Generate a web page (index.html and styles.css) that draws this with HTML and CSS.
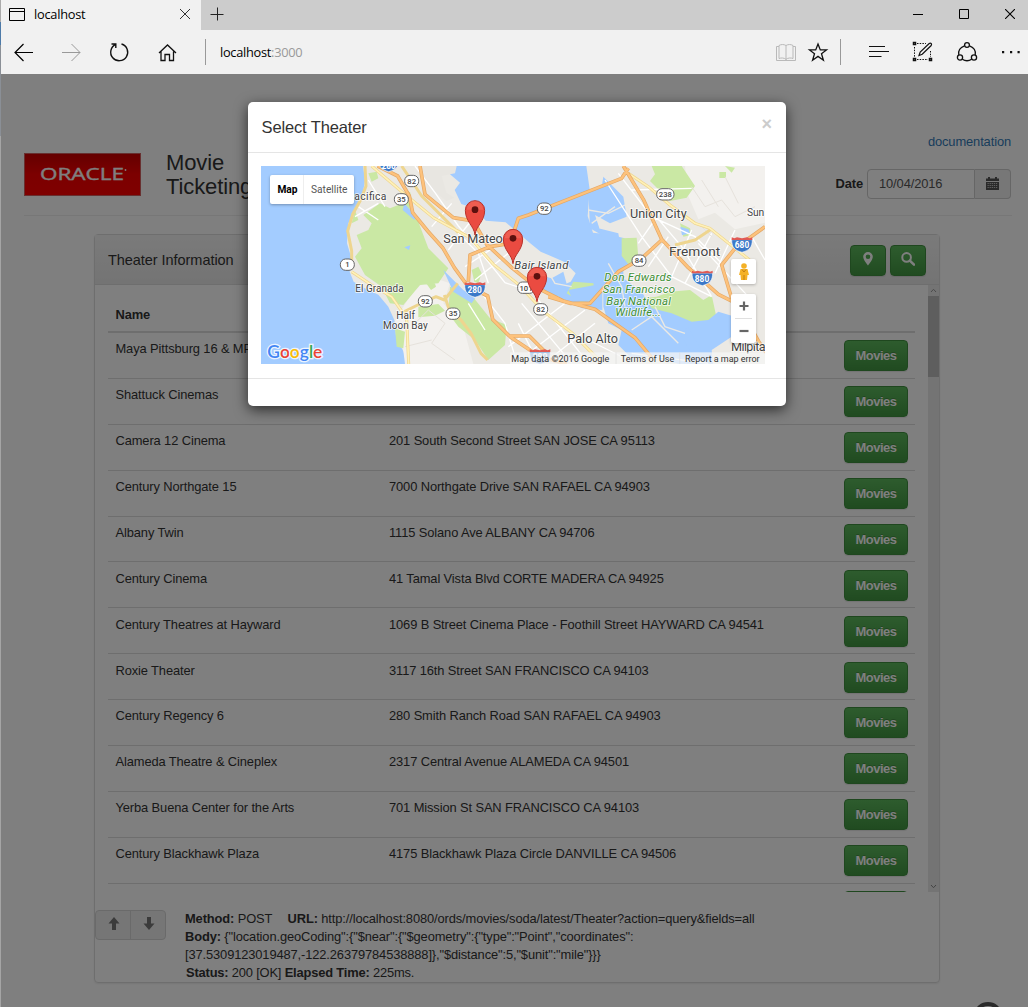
FILE: index.html
```html
<!DOCTYPE html>
<html lang="en">
<head>
<meta charset="utf-8">
<title>localhost</title>
<link rel="stylesheet" href="styles.css">
</head>
<body>
<div class="window">
  <header class="tabbar">
    <div class="tab">
      <svg class="tab-icon" viewBox="0 0 16 13"><path d="M.5.5h15v12H.5zM.5 3.5h15" fill="none" stroke="#000"/></svg>
      <span class="tab-title">localhost</span>
      <svg class="tab-close" viewBox="0 0 10 10"><path d="M0 0l10 10M10 0L0 10" stroke="#333"/></svg>
    </div>
    <svg class="tab-new" viewBox="0 0 14 14"><path d="M7.500 .5v13M.5 7.500h13" stroke="#222"/></svg>
    <div class="win-controls">
      <svg viewBox="0 0 10 10"><path d="M0 5.5h10" stroke="#000"/></svg>
      <svg viewBox="0 0 10 10"><path d="M.5.5h9v9h-9z" fill="none" stroke="#000"/></svg>
      <svg viewBox="0 0 10 10"><path d="M0 0l10 10M10 0L0 10" stroke="#000" stroke-width="1.1"/></svg>
    </div>
  </header>
  <nav class="toolbar">
    <div class="nav-icons">
      <svg viewBox="0 0 24 24"><path d="M21 12.5H3M11.5 4L3 12.5l8.500 8.500" stroke="#000" stroke-width="1.200"/></svg>
      <svg viewBox="0 0 24 24"><path d="M2 12.500h18M11.500 4l8.500 8.500-8.500 8.500" stroke="#999"/></svg>
      <svg viewBox="0 0 24 24"><path d="M13.500 4a8.500 8.500 0 1 1-5.700.4M3.500 4H7.800V8" stroke="#111" stroke-width="1.4"/></svg>
      <svg viewBox="0 0 24 24"><path d="M3 13L11.500 5l8.500 8M5 11.500V20.500h4v-6h4.500v6h4V11.500" stroke="#111" stroke-width="1.3"/></svg>
    </div>
    <div class="address"><span>localhost</span>:3000</div>
    <div class="tools">
      <svg viewBox="0 0 24 24"><path d="M12 5.500v14.500M12 5.500c-2-1.300-5-1.300-7 0v13c2-.8 5-.8 7 .8 2-1.600 5-1.600 7-.8v-13c-2-1.300-5-1.300-7 0M5 6.500H2.500v14h19v-14H19" stroke="#b9b9b9"/></svg>
      <svg viewBox="0 0 24 24"><path d="M12 4l2.300 5.900h6.200l-5 3.900 1.900 6.400-5.400-3.800-5.400 3.800 1.900-6.400-5-3.900h6.200z" stroke="#111" stroke-width="1.300"/></svg>
      <i class="sep"></i>
      <svg viewBox="0 0 24 24"><path d="M2 6.500h16M2 11.500h20M2 16.500h12.500" stroke="#111" stroke-width="1.200"/></svg>
      <svg viewBox="0 0 24 24"><path d="M6 3.500h9M3.500 7v10M6 19.500h11M19.500 11v6" stroke="#111" stroke-dasharray="1.500 1.200"/><path d="M2.500 2.500h2v2h-2zM2.500 18.500h2v2h-2zM18.500 18.500h2v2h-2z" stroke="#111" stroke-width="1.500"/><path d="M8 15.500l1.200-3.500 9-8.500c1.600-1 3 .4 2 2l-9 8.700z" stroke="#111" stroke-width="1.200"/></svg>
      <svg viewBox="0 0 24 24"><g stroke="#111" stroke-width="1.300"><circle cx="12" cy="5" r="2.400"/><circle cx="5" cy="17.500" r="2.600"/><circle cx="19" cy="17.500" r="2.600"/><path d="M9.500 5.800C5 7.500 3 11 3.800 15M14.500 5.800c4.500 1.700 6.500 5.200 5.700 9.200M7.300 19.200c3 2 6.400 2 9.400 0"/></g></svg>
      <svg viewBox="0 0 24 24"><path d="M3 11h2.200v2.200H3zM11 11h2.200v2.200H11zM18.500 11h2.200v2.200h-2.200z" fill="#111" stroke="none"/></svg>
    </div>
  </nav>

  <main class="page">
    <div class="page-head">
      <svg class="logo" viewBox="0 0 117 43">
        <defs><linearGradient id="red" x2="0" y2="1"><stop stop-color="#c80000"/><stop offset=".5" stop-color="#f80000"/><stop offset="1" stop-color="#ff0000"/></linearGradient></defs>
        <rect width="117" height="43" fill="url(#red)"/><rect x=".5" y=".5" width="116" height="42" fill="none" stroke="#d06060"/>
        <text x="16" y="27" textLength="84" lengthAdjust="spacingAndGlyphs" class="logo-text">ORACLE</text><circle cx="101.500" cy="17" r=".9" fill="#fff"/>
      </svg>
      <h1>Movie<br>Ticketing</h1>
      <div class="head-right">
        <a class="doc-link">documentation</a>
        <div class="date-row">
          <label>Date</label>
          <div class="date-input">10/04/2016</div>
          <div class="date-addon"><svg viewBox="0 0 13 13"><path d="M0 1.500h2V0h2v1.500h5V0h2v1.500h2V4H0zM0 5h13v8H0z" fill="#555"/><path d="M1.500 6.500h10M1.500 8.500h10M1.500 10.500h10" stroke="#ddd" stroke-width=".8" stroke-dasharray="1.300 .8"/></svg></div>
        </div>
      </div>
    </div>

    <section class="panel">
      <div class="panel-heading">
        <h2>Theater Information</h2>
        <button class="btn icon-btn"><svg viewBox="0 0 14 14"><path d="M7 0a4.800 4.800 0 0 0-4.800 4.800C2.200 8 7 13.500 7 13.500S11.800 8 11.800 4.800A4.800 4.800 0 0 0 7 0zm0 2.500a2.300 2.300 0 1 1 0 4.600 2.300 2.300 0 0 1 0-4.600z" fill="#fff" fill-rule="evenodd"/></svg></button>
        <button class="btn icon-btn"><svg viewBox="0 0 14 14"><circle cx="5.600" cy="5.400" r="4.300" fill="none" stroke="#fff" stroke-width="2"/><path d="M8.800 8.600l4.200 4" stroke="#fff" stroke-width="2.600" stroke-linecap="round"/></svg></button>
      </div>
      <div class="scroller">
        <div class="table">
          <div class="row row-head"><span>Name</span></div>
          <div class="row"><span>Maya Pittsburg 16 &amp; MPX</span><span></span><button class="btn">Movies</button></div>
          <div class="row"><span>Shattuck Cinemas</span><span></span><button class="btn">Movies</button></div>
          <div class="row"><span>Camera 12 Cinema</span><span>201 South Second Street SAN JOSE CA 95113</span><button class="btn">Movies</button></div>
          <div class="row"><span>Century Northgate 15</span><span>7000 Northgate Drive SAN RAFAEL CA 94903</span><button class="btn">Movies</button></div>
          <div class="row"><span>Albany Twin</span><span>1115 Solano Ave ALBANY CA 94706</span><button class="btn">Movies</button></div>
          <div class="row"><span>Century Cinema</span><span>41 Tamal Vista Blvd CORTE MADERA CA 94925</span><button class="btn">Movies</button></div>
          <div class="row"><span>Century Theatres at Hayward</span><span>1069 B Street Cinema Place - Foothill Street HAYWARD CA 94541</span><button class="btn">Movies</button></div>
          <div class="row"><span>Roxie Theater</span><span>3117 16th Street SAN FRANCISCO CA 94103</span><button class="btn">Movies</button></div>
          <div class="row"><span>Century Regency 6</span><span>280 Smith Ranch Road SAN RAFAEL CA 94903</span><button class="btn">Movies</button></div>
          <div class="row"><span>Alameda Theatre &amp; Cineplex</span><span>2317 Central Avenue ALAMEDA CA 94501</span><button class="btn">Movies</button></div>
          <div class="row"><span>Yerba Buena Center for the Arts</span><span>701 Mission St SAN FRANCISCO CA 94103</span><button class="btn">Movies</button></div>
          <div class="row"><span>Century Blackhawk Plaza</span><span>4175 Blackhawk Plaza Circle DANVILLE CA 94506</span><button class="btn">Movies</button></div>
          <div class="row"><span></span><span></span><button class="btn"></button></div>
        </div>
        <div class="scrollbar">
          <svg viewBox="0 0 11 11"><path d="M3 7l2.500-2.700L8 7" fill="none" stroke="#999"/></svg>
          <div class="thumb"></div>
          <svg viewBox="0 0 11 11"><path d="M3 4l2.500 2.700L8 4" fill="none" stroke="#888"/></svg>
        </div>
      </div>
      <div class="panel-footer">
        <div class="pager">
          <span><svg viewBox="0 0 12 13"><path d="M6 0l5.500 6.500H8V13H4V6.500H.5z" fill="#777"/></svg></span>
          <span><svg viewBox="0 0 12 13"><path d="M6 13L.5 6.500H4V0h4v6.500h3.500z" fill="#777"/></svg></span>
        </div>
        <div class="request">
          <div><b>Method:</b> POST <b class="url">URL:</b> http://localhost:8080/ords/movies/soda/latest/Theater?action=query&amp;fields=all</div>
          <div><b>Body:</b> {"location.geoCoding":{"$near":{"$geometry":{"type":"Point","coordinates":</div>
          <div>[37.5309123019487,-122.26379784538888]},"$distance":5,"$unit":"mile"}}}</div>
          <div class="status"><b>Status:</b> 200 [OK] <b>Elapsed Time:</b> 225ms.</div>
        </div>
      </div>
    </section>
    <div class="corner-badge"></div>

    <div class="backdrop"></div>
    <div class="modal">
      <div class="modal-header"><h3>Select Theater</h3><span class="close">×</span></div>
      <div class="modal-body">
        <div class="map">
          <svg class="map-art" viewBox="18 18 1512 594">
            <defs>
              <g id="interstate"><path d="M-31-17h62c0 22-8 32-31 38-23-6-31-16-31-38z" fill="#3b78c8" stroke="#fff" stroke-width="2"/><path d="M-31-24l8 3 8-3 15 3 15-3 8 3 8-3v8h-62z" fill="#e05a55"/></g>
              <g id="shield"><rect x="-21" y="-17" width="42" height="34" rx="16" fill="#fff" stroke="#666" stroke-width="3"/></g>
              <g id="pin"><path d="M0 76C-3 48-29 36-29 2a29 29 0 0 1 58 0C29 36 3 48 0 76z" fill="#ea4b41" stroke="#b8332c" stroke-width="3"/><path d="M-25 0a25 25 0 0 1 50 0" fill="#f36f62" opacity=".5"/><circle r="10" fill="#5c100e"/></g>
            </defs>
            <rect x="18" y="18" width="1512" height="594" fill="#a3ccff"/>
            <!-- land masses -->
            <path d="M324 18l6 42-8 50-22 45-20 35-4 60 12 40-4 45 12 30 24 15 50 24 30 36 18 40 6 55 22 40 8 37h1080V18H994l10 70-6 80 16 50 45 5 50 12-5 35 38 20-55 60-45 50 0 50-60-5-70-30-10-30 45-20 15-25-35-35-70-30-35-28-70-60-60-5-28-35-45-15-20-42 16-22-30-25-10-35z" fill="#ebe9e4"/>
            <path d="M500 18h105l-5 22-40 8 14 50 24 15-24 10-60-50z" fill="#e8e6e1"/>
            <!-- hills -->
            <path d="M470 400l55-50 60 20-20 60 60 70 30 112H450l-10-80-20-50zM1290 18h240v170l-90 20-60-50-50 20-30-70z" fill="#f3f1ee"/>
            <!-- parks -->
            <g fill="#cae8a4">
              <path d="M325 165l50-35 30 15 50-20 35 60 30 80 60 60-30 45-55 5-50 60-40-5-25-50-50-35-30-55 20-25-15-40 35-15 10-20zM585 380l60 20 60 75 50 20-5 60-50 45-40-60-50-40-30-40zM340 40l25-5 5 20-20 10zM440 105l25-10 10 45-20 10zM420 505l30 10-5 50-20-5zM490 440l60-8 20 20-30 15-50 5zM510 365l25-10 8 25-15 10zM650 330l20-10 10 20-10 30-12-5zM300 150l10 30-20 10z"/>
              <path d="M1190 18h90l40 60-25 35-50 10-60-60 15-20zM1100 235l45-2 5 60-30 20-20-25zM955 365l60 5 10 50-50 5-40-25zM1155 415l50-5 40-15 60-5 40 30 25-15 15 70-30 45-80-20-50-30-50-10zM1275 190l30 15 5 20-25 5zM1410 18l30 5-10 15zM1393 36h20v18h-20z"/>
            </g>
            <!-- bay and salt ponds -->
            <path d="M1045 440l0-75 25-60 35 10 0 40 55 40 30 50 60 15 60 25 50-5 30-25 50 15-10 60-60 40 5 50-40 20-70-30-70-20-70 0-35-35 10-45-40-20z" fill="#a3ccff"/>
            <g fill="#a3ccff"><path d="M1000 90l40-10 5-30 60 60 10 60-50 20-45-25 20 60-35-20zM1030 205l60 15 10 60-40-10zM850 345l40 10 35-20 15 55-35 20-60-20zM940 390l80-15 15 45-80 5zM565 330l60 60 35 25-10 15-55-35zM448 130l35 40-5 10-35-30zM1276 200l25 8 4 12-24 6zM1270 515l30-12 35 60-30 8zM448 262l18-6-4 14z"/></g>
            <g fill="none" stroke="#ebe9e4" stroke-width="4"><path d="M1000 150l60 10 60-30M1010 190l70-50M1060 310l40 70 10 60M1200 440l30 60 60 20M1130 510l60-40 80 80M870 320l30 50 50 10"/></g>
            <!-- local streets -->
            <g fill="none" stroke="#fff" stroke-width="4">
              <path d="M480 18l60 80 70 100 60 70 80 100 60 20M590 130l-60 70M650 180l-70 90M600 210l70 70 30 90M720 260l-90 60M760 280l-100 80M310 140l60 40M300 170l70-40M340 60l50 80M680 400l70 90 30 100M800 430l150 180M850 420l150 190M760 560l170-130M820 580l170-130M880 600l140-110M790 490l60 120M1050 60l110 170 90 120 120 60M1090 40l100 130 130 60 80 80M1170 130l110 130 90 150M1240 230l-60 90M1310 210l-60 140M1330 250l150 160M1220 150l-70 100M1370 220l-80 150M1440 210l-60 130M1490 230l40 70M1130 90l180-5M1000 540l120 60M1130 580l230 30M640 430l50 80"/>
            </g>
            <g fill="none" stroke="#e6e2dc" stroke-width="3"><path d="M470 500l50-50 50 40-40 60 70 50M1310 80l40 60 50-20 40 50 60-30M450 560l80-20M1340 60l50 80M1410 50l40 80M1340 200l30 30"/></g>
            <!-- secondary roads -->
            <g fill="none" stroke="#eed58f" stroke-width="9" stroke-linejoin="round">
              <path d="M350 18l100 85 85 70 110 60 70 80 75 60 80 85 80 60 90 90M440 18l60 90 110 110M290 335l60 40 60 35 45 65 6 137M448 455l40-20 55-25 25 10 40-50M568 405l15 45 35 30 30 40 30 60 20 20M330 18l3 60-15 40-25 45-15 50 12 60 0 55M1120 40l60 40 65 55 75 55 45 15 75 60 50 40M1365 210l-45 30-60 15"/>
            </g>
            <path d="M350 18l100 85 85 70 110 60 70 80 75 60 80 85 80 60 90 90M290 335l60 40 60 35 45 65 6 137M1120 40l60 40 65 55 75 55 45 15 75 60 50 40" fill="none" stroke="#fff1b8" stroke-width="5" stroke-linejoin="round"/>
            <!-- freeways -->
            <g class="freeway">
              <path class="casing" d="M368 18l60 30 35 60 10 50 45 55 45 50 35 60 40 55 60 30 15 70 50 50 60 0 60 60M495 18l15 85 85 70 60 10 40 70 75 70 75 60 80 40 95 25 120 85 50 60M640 365l5-80 60-25 60-10 25-75 30-10 280-110 20-30M1105 18l60 100 55 120 80 85 90 80 60 30 60 110 40 60M1220 240l-60 55-70 40-85 95-60 0-65-20M1530 200l-90 65-40 50 30 100 50 70M765 530l90 60 80 22"/>
              <path class="fill" d="M368 18l60 30 35 60 10 50 45 55 45 50 35 60 40 55 60 30 15 70 50 50 60 0 60 60M495 18l15 85 85 70 60 10 40 70 75 70 75 60 80 40 95 25 120 85 50 60M640 365l5-80 60-25 60-10 25-75 30-10 280-110 20-30M1105 18l60 100 55 120 80 85 90 80 60 30 60 110 40 60M1220 240l-60 55-70 40-85 95-60 0-65-20M1530 200l-90 65-40 50 30 100 50 70M765 530l90 60 80 22"/>
            </g>
            <!-- road shields -->
            <g class="shield-text">
              <use href="#shield" x="470" y="63"/><text x="470" y="71">82</text>
              <use href="#shield" x="439" y="118"/><text x="439" y="126">35</text>
              <use href="#shield" x="277" y="314"/><text x="277" y="322">1</text>
              <use href="#shield" x="511" y="424"/><text x="511" y="432">92</text>
              <use href="#shield" x="594" y="461"/><text x="594" y="469">35</text>
              <use href="#shield" x="868" y="146"/><text x="868" y="154">92</text>
              <rect x="1205" y="86" width="52" height="34" rx="16" fill="#fff" stroke="#666" stroke-width="3"/><text x="1231" y="111">238</text>
              <use href="#shield" x="1152" y="302"/><text x="1152" y="310">84</text>
              <rect x="788" y="366" width="50" height="34" rx="14" fill="#fff" stroke="#666" stroke-width="3"/><text x="813" y="392">101</text>
              <use href="#shield" x="857" y="448"/><text x="857" y="456">82</text>
            </g>
            <g class="interstate-text">
              <use href="#interstate" x="401" y="14"/><text x="401" y="26">280</text>
              <use href="#interstate" x="660" y="391"/><text x="659" y="400">280</text>
              <use href="#interstate" x="1461" y="256"/><text x="1461" y="265">680</text>
              <use href="#interstate" x="1342" y="356"/><text x="1341" y="365">880</text>
              <use href="#interstate" x="855" y="592"/><text x="855" y="601">280</text>
            </g>
            <!-- place names -->
            <g class="place">
              <text x="298" y="119" font-size="31" textLength="96">acifica</text>
              <text x="301" y="396" font-size="30" textLength="145">El Granada</text>
              <text x="424" y="477" font-size="30" textLength="56">Half</text>
              <text x="384" y="507" font-size="30" textLength="134">Moon Bay</text>
              <text x="565" y="249" font-size="38" textLength="178">San Mateo</text>
              <text x="1125" y="174" font-size="38" textLength="170">Union City</text>
              <text x="1242" y="287" font-size="41" textLength="154">Fremont</text>
              <text x="1476" y="167" font-size="31" textLength="52">Sun</text>
              <text x="937" y="548" font-size="38" textLength="152">Palo Alto</text>
              <text x="1428" y="573" font-size="38" textLength="122">Milpitas</text>
              <text x="778" y="328" font-size="34" textLength="162" font-style="italic">Bair Island</text>
            </g>
            <g class="place park">
              <text x="1048" y="363" textLength="202">Don Edwards</text>
              <text x="1043" y="398" textLength="217">San Francisco</text>
              <text x="1054" y="434" textLength="194">Bay National</text>
              <text x="1081" y="469" textLength="137">Wildlife...</text>
            </g>
            <use href="#pin" x="660" y="149"/>
            <use href="#pin" x="774" y="235"/>
            <use href="#pin" x="846" y="349"/>
            <rect x="765" y="577" width="765" height="35" fill="#f5f5f5" opacity=".75"/>
            <text class="google" x="37" y="593" textLength="165" lengthAdjust="spacingAndGlyphs"><tspan fill="#4285f4">G</tspan><tspan fill="#ea4335">o</tspan><tspan fill="#fbbc05">o</tspan><tspan fill="#4285f4">g</tspan><tspan fill="#34a853">l</tspan><tspan fill="#ea4335">e</tspan></text>
            <g class="credits">
              <text x="769" y="606" textLength="294">Map data ©2016 Google</text>
              <text x="1097" y="606" textLength="161">Terms of Use</text>
              <text x="1290" y="606" textLength="224">Report a map error</text>
              <path d="M1083 577v35M1274 577v35" stroke="#ddd" stroke-width="2"/>
            </g>
          </svg>
          <div class="map-type"><b>Map</b><span>Satellite</span></div>
          <div class="pegman"><svg viewBox="0 0 12 18"><circle cx="6" cy="3" r="2.800" fill="#f4b127"/><path d="M2.500 6h7l1.500 6H9.500l-.5 5H3l-.5-5H1z" fill="#f4b127"/><path d="M4 6.500l2 2.500 2-2.500M6 12v5" stroke="#c47f12" fill="none"/></svg></div>
          <div class="zoom"><svg viewBox="0 0 10 10"><path d="M5 .5v9M.5 5h9" stroke="#666" stroke-width="2.200"/></svg><i></i><svg viewBox="0 0 10 10"><path d="M.5 5h9" stroke="#666" stroke-width="2.200"/></svg></div>
        </div>
      </div>
      <div class="modal-footer"></div>
    </div>
  </main>
</div>
</body>
</html>
```
FILE: styles.css
```css
* { box-sizing: border-box; }
body { margin: 0; font-family: "Liberation Sans", Arial, sans-serif; font-size: 12.9px; letter-spacing: -.115px; color: #333; }
h1, h2, h3 { margin: 0; font-weight: 400; }
svg { display: block; letter-spacing: 0; }
.window {
  width: 1028px; height: 1007px; overflow: hidden; padding-left: 1px;
  display: flex; flex-direction: column;
  background: linear-gradient(#aaa 0 22px, #4d7aa8 22px 45px, #8a8f96 45px 136px, #a5a5a5 136px);
}

/* browser chrome */
.tabbar { height: 30px; background: #ccc; display: flex; align-items: center; flex: none; }
.tab { width: 200px; height: 30px; background: #f1f1f1; display: flex; align-items: center; padding: 0 11px 2px 8px; }
.tab-icon { width: 16px; height: 13px; }
.tab-title { flex: 1; margin-left: 9px; font: 12.8px "Open Sans", sans-serif; letter-spacing: -.25px; color: #000; }
.tab-close { width: 10px; height: 10px; }
.tab-new { width: 14px; height: 14px; margin: -2px 0 0 9px; }
.win-controls { margin: -2px 13px 0 auto; display: flex; gap: 36px; }
.win-controls svg { width: 10px; height: 10px; }
.toolbar { height: 44px; flex: none; background: #f1f1f1; display: flex; align-items: center; padding: 0 5px 0 11px; }
.toolbar svg { width: 24px; height: 24px; fill: none; }
.nav-icons { display: flex; gap: 24px; }
.address { margin-left: 25px; height: 26px; line-height: 27px; border-left: 1px solid #999; padding-left: 14px; flex: 1; font-family: "Open Sans", sans-serif; font-size: 12.8px; letter-spacing: -.28px; color: #999; }
.address span { color: #000; }
.tools { display: flex; align-items: center; gap: 20px; }
.tools svg:first-child { margin-right: -12px; }
.sep { width: 1px; height: 26px; background: #999; margin: 0 6px 0 -10px; }

/* page */
.page { position: relative; flex: 1; background: #fff; padding: 0 16px 0 23px; overflow: hidden; }
.page-head { height: 142px; border-bottom: 1px solid #eee; display: flex; align-items: flex-start; }
.logo { width: 117px; height: 43px; margin-top: 79px; }
.logo-text { font: 400 16.500px "Open Sans", sans-serif; fill: #fff; stroke: #fff; stroke-width: .35px; }
h1 { font-size: 22px; line-height: 24px; margin: 77px 0 0 25px; }
.head-right { margin-left: auto; padding: 59px 1px 0 0; text-align: right; }
.doc-link { display: block; line-height: 18px; color: #337ab7; }
.date-row { display: flex; align-items: center; margin-top: 18px; }
.date-row label { font-weight: 700; margin: -1px 4px 0 0; }
.date-input { width: 108px; height: 30px; line-height: 28px; border: 1px solid #ccc; border-radius: 4px 0 0 4px; padding-left: 11px; text-align: left; color: #555; }
.date-addon { width: 36px; height: 30px; border: 1px solid #ccc; border-left: 0; border-radius: 0 4px 4px 0; background: #eee; display: grid; place-items: center; padding-bottom: 2px; }
.date-addon svg { width: 13px; height: 13px; }

.btn { height: 31px; width: 64px; padding: 0; border: 1px solid #3e8f3e; border-radius: 4px; background: linear-gradient(#5cb85c, #419641); color: #fff; font: 700 12.9px "Liberation Sans", sans-serif; letter-spacing: -.45px; text-shadow: 0 -1px 0 rgba(0,0,0,.2); box-shadow: 0 1px 1px rgba(0,0,0,.1); }
.icon-btn { width: 36px; height: 31px; display: grid; place-items: center; }
.icon-btn svg { width: 14px; height: 14px; margin-top: -3px; }

.panel { width: 846px; height: 749px; margin: 18px 0 0 70px; border: 1px solid #ddd; border-radius: 4px; box-shadow: 0 1px 2px rgba(0,0,0,.08); }
.panel-heading { height: 50px; padding: 2px 13px 0; display: flex; align-items: center; gap: 4px; background: linear-gradient(#f5f5f5, #e8e8e8); border-bottom: 1px solid #ddd; }
.panel-heading h2 { flex: 1; font-size: 14.5px; letter-spacing: -.05px; margin-top: -2px; }
.scroller { height: 607px; overflow: hidden; display: flex; justify-content: space-between; padding-left: 13px; }
.table { width: 807px; }
.row { height: 45.9px; display: grid; grid-template-columns: 273.500px 1fr 64px; padding: 7.300px 7px 0 7.500px; border-bottom: 1px solid #ddd; line-height: 18px; }
.row span { white-space: nowrap; }
.row-head { height: 48px; padding-top: 20.500px; font-weight: 700; border-bottom-width: 2px; }
.scrollbar { width: 11px; background: #e8e8e8; display: flex; flex-direction: column; }
.scrollbar svg { width: 11px; height: 11px; }
.thumb { height: 81px; background: #bdbdbd; margin-bottom: auto; }
.panel-footer { display: flex; padding-top: 18px; }
.pager { display: flex; height: 30px; width: 71px; border: 1px solid #d5d5d5; border-radius: 4px; background: #ececec; }
.pager span { flex: 1; display: grid; place-items: center; padding: 0 0 3px 1px; }
.pager span + span { border-left: 1px solid #d5d5d5; }
.pager svg { width: 12px; height: 13px; }
.request { margin-left: 19px; line-height: 18px; white-space: nowrap; letter-spacing: -.125px; }
.url { margin-left: 12px; }
.status { padding-left: 1px; letter-spacing: -.18px; }
.corner-badge { position: absolute; left: 974px; top: 928px; width: 26px; height: 22px; border: 4px solid #555; border-radius: 50%; }

/* modal */
.backdrop { position: absolute; inset: 0; background: rgba(0,0,0,.5); }
.modal { position: absolute; left: 247px; top: 28px; width: 538px; height: 304px; background: #fff; border-radius: 5px; box-shadow: 0 4px 14px rgba(0,0,0,.65); }
.modal-header { height: 51px; display: flex; justify-content: space-between; padding: 0 14px 0 13.500px; border-bottom: 1px solid #e5e5e5; }
.modal-header h3 { font-size: 16.500px; line-height: 51px; letter-spacing: -.13px; }
.close { font-size: 18px; font-weight: 700; line-height: 44px; color: #ccc; }
.modal-body { padding: 13px 13px 14px; }
.map { position: relative; width: 504px; height: 198px; font-family: Roboto, sans-serif; letter-spacing: 0; }
.map-art { width: 504px; height: 198px; }
.freeway path { fill: none; stroke-linejoin: round; }
.freeway .casing { stroke: #e3a868; stroke-width: 11px; }
.freeway .fill { stroke: #fdc27c; stroke-width: 7px; }
.shield-text { font: 500 23px Roboto, sans-serif; fill: #444; text-anchor: middle; }
.interstate-text { font: 700 25px Roboto, sans-serif; fill: #fff; text-anchor: middle; }
.place { font-family: Roboto, sans-serif; fill: #444; stroke: #fff; stroke-width: 5px; stroke-opacity: .8; paint-order: stroke; }
.park { font-size: 34px; font-style: italic; fill: #3f8f35; }
.google { font: 600 52px Lato, sans-serif; stroke: #fff; stroke-opacity: .8; stroke-width: 8px; paint-order: stroke; }
.credits { font: 27px Roboto, sans-serif; fill: #333; }
.map-type { position: absolute; left: 9px; top: 9px; width: 84px; height: 29px; display: flex; align-items: center; background: #fff; border-radius: 2px; box-shadow: 0 1px 3px rgba(0,0,0,.3); font-size: 10.200px; }
.map-type b { width: 34px; line-height: 29px; padding-left: 7.500px; font-weight: 700; letter-spacing: -.1px; color: #000; border-right: 1px solid #eee; }
.map-type span { padding-left: 7px; color: #555; }
.pegman, .zoom { position: absolute; left: 470px; width: 25px; background: #fff; border-radius: 2px; box-shadow: 0 1px 3px rgba(0,0,0,.25); display: grid; place-items: center; }
.pegman { top: 93px; height: 25px; }
.pegman svg { width: 12px; height: 18px; }
.zoom { top: 128px; height: 49px; grid-template-rows: 24px 1px 24px; }
.zoom i { width: 17px; height: 1px; background: #e0e0e0; }
.zoom svg { width: 10px; height: 10px; }
.modal-footer { border-top: 1px solid #e5e5e5; height: 27px; }
```
